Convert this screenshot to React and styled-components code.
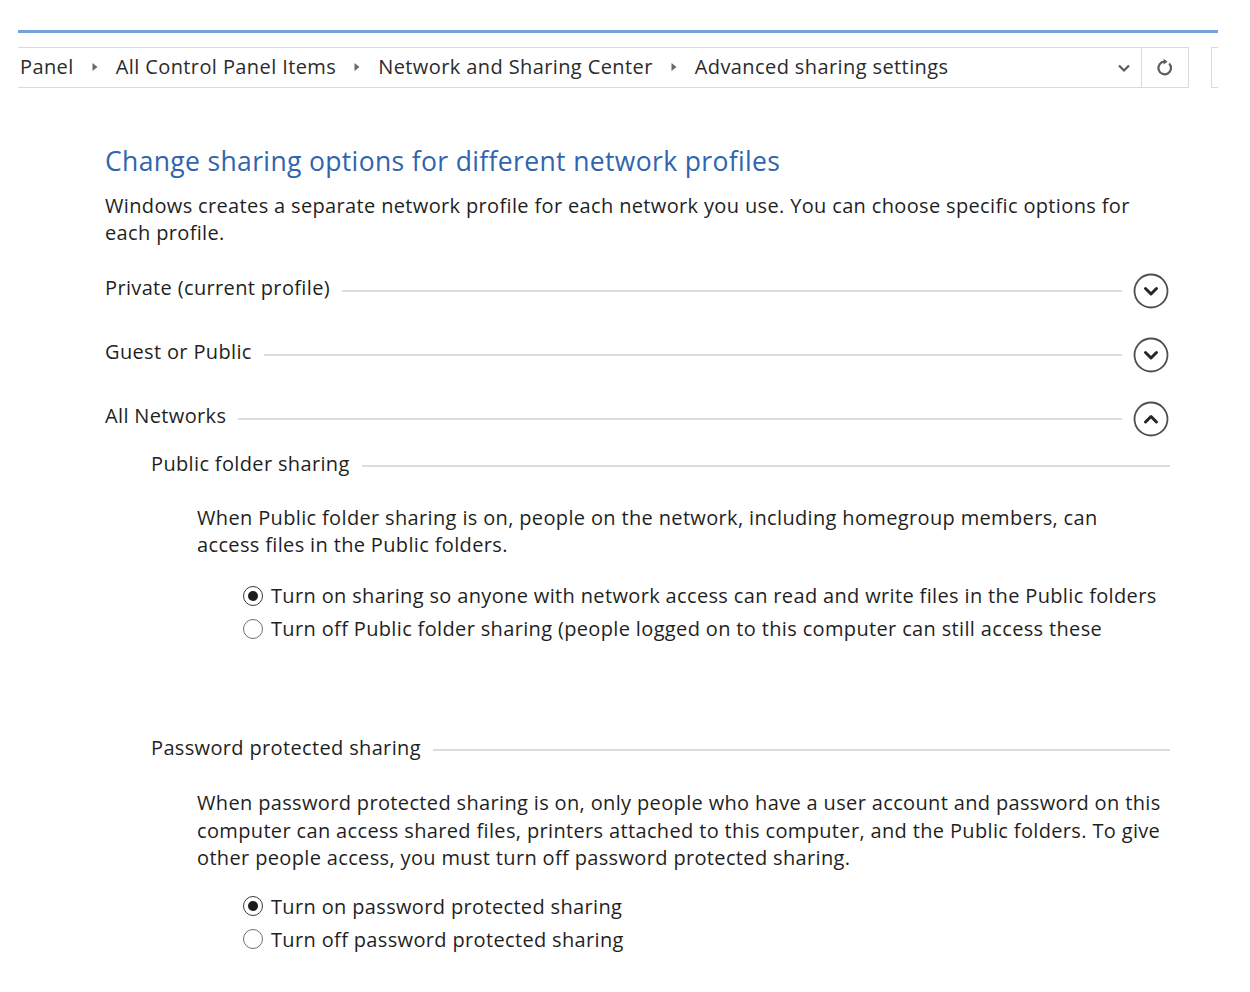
import React from 'react';
import styled, { createGlobalStyle } from 'styled-components';

const GlobalStyle = createGlobalStyle`
  body {
    margin: 0;
    background: #ffffff;
    font-family: "Open Sans", "Noto Sans", Arial, sans-serif;
    color: #1f1f1f;
  }
`;

const Window = styled.div`
  width: 1250px;
  padding: 30px 0 40px 18px;
  box-sizing: border-box;
`;

const TopRule = styled.div`
  width: 1200px;
  height: 3px;
  background: #72a4dc;
`;

const AddressRow = styled.div`
  display: flex;
  align-items: stretch;
  height: 41px;
  margin-top: 14px;
  width: 1200px;
`;

const AddressBox = styled.div`
  display: flex;
  align-items: center;
  width: 1172px;
  box-sizing: border-box;
  border: 1px solid #dadada;
  border-left: none;
`;

const Crumbs = styled.div`
  flex: 1;
  display: flex;
  align-items: center;
  gap: 18px;
  padding-left: 2px;
  margin-top: -2px;
  font-size: 20px;
  letter-spacing: 0.4px;
  color: #2b2b2b;
  white-space: nowrap;
`;

const DropButton = styled.div`
  width: 34px;
  display: flex;
  align-items: center;
  justify-content: center;
  align-self: stretch;
  padding-left: 4px;
`;

const RefreshButton = styled.div`
  width: 46px;
  align-self: stretch;
  display: flex;
  align-items: center;
  justify-content: center;
  border-left: 1px solid #dadada;
`;

const SearchStub = styled.div`
  width: 6px;
  margin-left: 22px;
  border: 1px solid #dadada;
  border-right: none;
`;

const Content = styled.main`
  padding-left: 87px;
  width: 1065px;
  margin-top: 57px;
`;

const Title = styled.h1`
  margin: 0;
  font-size: 26.5px;
  letter-spacing: 0.35px;
  line-height: 32px;
  font-weight: 400;
  color: #3065ad;
`;

const Text = styled.p`
  margin: ${(p) => p.$top || 0}px 0 0 ${(p) => p.$indent || 0}px;
  font-size: 20px;
  letter-spacing: 0.35px;
  line-height: ${(p) => p.$lh || 27}px;
  color: #1f1f1f;
  white-space: nowrap;
`;

const ProfileRow = styled.div`
  display: flex;
  align-items: center;
  height: 64px;
  margin-top: ${(p) => p.$top || 0}px;
`;

const RowLabel = styled.span`
  font-size: 20px;
  letter-spacing: 0.35px;
  line-height: 27px;
  color: #1f1f1f;
  white-space: nowrap;
  margin-top: ${(p) => (p.$sub ? -4 : -7)}px;
`;

const Rule = styled.div`
  flex: 1;
  height: 2px;
  background: #dcdcdc;
  margin: 0 ${(p) => (p.$end ? 0 : 10)}px 0 12px;
`;

const SubRow = styled.div`
  display: flex;
  align-items: center;
  height: 27px;
  padding-left: 46px;
  margin-top: ${(p) => p.$top || 0}px;
`;

const RadioGroup = styled.div`
  display: flex;
  flex-direction: column;
  padding-left: 138px;
  margin-top: ${(p) => p.$top || 0}px;
`;

const RadioRow = styled.label`
  display: flex;
  align-items: center;
  height: 33px;
  font-size: 20px;
  letter-spacing: 0.35px;
  color: #1f1f1f;
  white-space: nowrap;
`;

const RadioDot = styled.span`
  width: 20px;
  height: 20px;
  flex: none;
  box-sizing: border-box;
  border-radius: 50%;
  border: 1.5px solid ${(p) => (p.$on ? '#3a3a3a' : '#6e6e6e')};
  margin-right: 8px;
  display: flex;
  align-items: center;
  justify-content: center;
  background: #fff;

  &::after {
    content: '';
    width: 10px;
    height: 10px;
    border-radius: 50%;
    background: ${(p) => (p.$on ? '#1c1c1c' : 'transparent')};
  }
`;

const CrumbArrow = () => (
  <svg width="6" height="10" viewBox="0 0 6 10">
    <path d="M0.5 1 L5.5 5 L0.5 9 Z" fill="#6a6a6a" />
  </svg>
);

const Chevron = ({ up }) => (
  <svg width="38" height="38" viewBox="0 0 38 38">
    <circle cx="19" cy="19" r="16.5" fill="none" stroke="#4f4f4f" strokeWidth="1.8" />
    <path
      d={up ? 'M13.5 22 L19 16.5 L24.5 22' : 'M13.5 16.5 L19 22 L24.5 16.5'}
      fill="none"
      stroke="#262626"
      strokeWidth="3"
      strokeLinecap="round"
      strokeLinejoin="round"
    />
  </svg>
);

const crumbs = ['Panel', 'All Control Panel Items', 'Network and Sharing Center', 'Advanced sharing settings'];

const Profile = ({ label, up, top }) => (
  <ProfileRow $top={top}>
    <RowLabel>{label}</RowLabel>
    <Rule />
    <Chevron up={up} />
  </ProfileRow>
);

const Radio = ({ on, children }) => (
  <RadioRow>
    <RadioDot $on={on} />
    {children}
  </RadioRow>
);

export default function App() {
  return (
    <Window>
      <GlobalStyle />
      <TopRule />
      <AddressRow>
        <AddressBox>
          <Crumbs>
            {crumbs.map((c, i) => (
              <React.Fragment key={c}>
                {i > 0 && <CrumbArrow />}
                <span>{c}</span>
              </React.Fragment>
            ))}
          </Crumbs>
          <DropButton>
            <svg width="14" height="10" viewBox="0 0 14 10">
              <path d="M2 2.5 L7 7.5 L12 2.5" fill="none" stroke="#5c5c5c" strokeWidth="2.2" />
            </svg>
          </DropButton>
          <RefreshButton>
            <svg width="20" height="20" viewBox="0 0 20 20">
              <path
                d="M14.2 5.6 A6.3 6.3 0 1 1 9.4 3.7"
                fill="none"
                stroke="#5c5c5c"
                strokeWidth="2.2"
              />
              <path d="M8.6 0.8 L12.6 3.8 L8.6 6.6 Z" fill="#5c5c5c" />
            </svg>
          </RefreshButton>
        </AddressBox>
        <SearchStub />
      </AddressRow>

      <Content>
        <Title>Change sharing options for different network profiles</Title>
        <Text $top={15}>
          Windows creates a separate network profile for each network you use. You can choose specific options for
          <br />
          each profile.
        </Text>

        <Profile label="Private (current profile)" top={13} />
        <Profile label="Guest or Public" />
        <Profile label="All Networks" up />

        <SubRow $top={1}>
          <RowLabel $sub>Public folder sharing</RowLabel>
          <Rule $end />
        </SubRow>
        <Text $top={25} $indent={92}>
          When Public folder sharing is on, people on the network, including homegroup members, can
          <br />
          access files in the Public folders.
        </Text>
        <RadioGroup $top={21}>
          <Radio on>Turn on sharing so anyone with network access can read and write files in the Public folders</Radio>
          <Radio>Turn off Public folder sharing (people logged on to this computer can still access these</Radio>
        </RadioGroup>

        <SubRow $top={91}>
          <RowLabel $sub>Password protected sharing</RowLabel>
          <Rule $end />
        </SubRow>
        <Text $top={26} $indent={92} $lh={27.5}>
          When password protected sharing is on, only people who have a user account and password on this
          <br />
          computer can access shared files, printers attached to this computer, and the Public folders. To give
          <br />
          other people access, you must turn off password protected sharing.
        </Text>
        <RadioGroup $top={18}>
          <Radio on>Turn on password protected sharing</Radio>
          <Radio>Turn off password protected sharing</Radio>
        </RadioGroup>
      </Content>
    </Window>
  );
}
